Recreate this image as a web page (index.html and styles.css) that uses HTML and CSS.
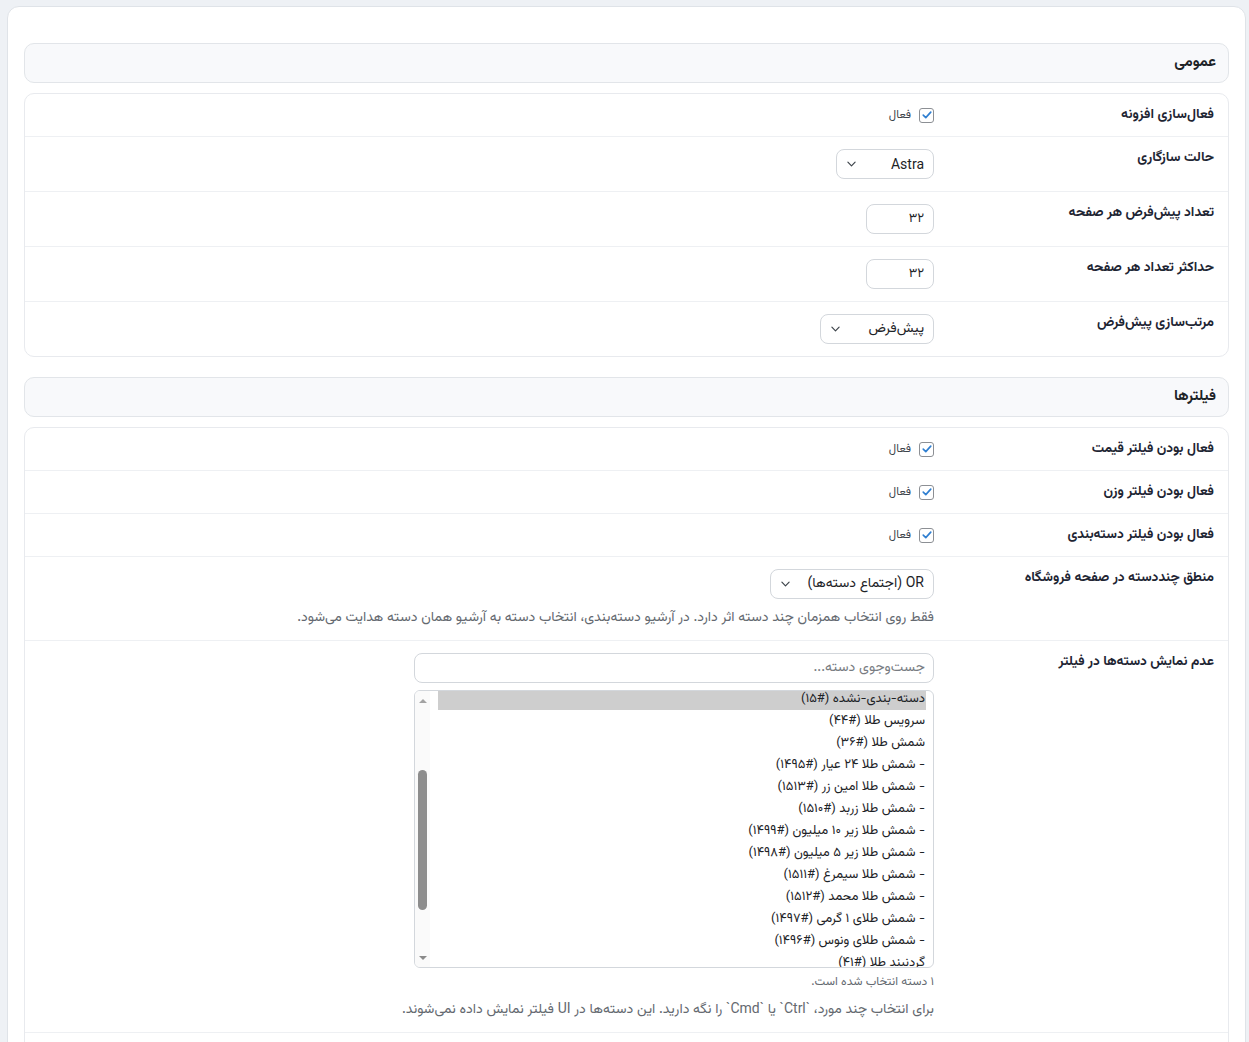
FILE: index.html
```html
<!DOCTYPE html>
<html lang="fa" dir="rtl">
<head>
<meta charset="utf-8">
<title>تنظیمات</title>
<link rel="stylesheet" href="styles.css">
</head>
<body>
<div class="panel">
  <h2 class="sec-head">عمومی</h2>
  <div class="card">
    <div class="row">
      <div class="label">فعال‌سازی افزونه</div>
      <div class="ctl">
        <label class="check"><span class="box"><svg viewBox="0 0 14 14" width="12" height="12"><path d="M2.6 7.2 L5.6 10.1 L11.4 3.6" fill="none" stroke="#2f7fd1" stroke-width="1.9" stroke-linecap="round" stroke-linejoin="round"/></svg></span><span>فعال</span></label>
      </div>
    </div>
    <div class="row">
      <div class="label">حالت سازگاری</div>
      <div class="ctl">
        <div class="select w-astra"><span class="latin">Astra</span><svg class="chev" viewBox="0 0 10 6" width="9" height="6"><path d="M1 1 L5 5 L9 1" fill="none" stroke="#3c434a" stroke-width="1.3" stroke-linecap="round" stroke-linejoin="round"/></svg></div>
      </div>
    </div>
    <div class="row">
      <div class="label">تعداد پیش‌فرض هر صفحه</div>
      <div class="ctl"><input class="num" type="text" value="۳۲"></div>
    </div>
    <div class="row">
      <div class="label">حداکثر تعداد هر صفحه</div>
      <div class="ctl"><input class="num" type="text" value="۳۲"></div>
    </div>
    <div class="row">
      <div class="label">مرتب‌سازی پیش‌فرض</div>
      <div class="ctl">
        <div class="select w-sort"><span>پیش‌فرض</span><svg class="chev" viewBox="0 0 10 6" width="9" height="6"><path d="M1 1 L5 5 L9 1" fill="none" stroke="#3c434a" stroke-width="1.3" stroke-linecap="round" stroke-linejoin="round"/></svg></div>
      </div>
    </div>
  </div>

  <h2 class="sec-head">فیلترها</h2>
  <div class="card">
    <div class="row">
      <div class="label">فعال بودن فیلتر قیمت</div>
      <div class="ctl">
        <label class="check"><span class="box"><svg viewBox="0 0 14 14" width="12" height="12"><path d="M2.6 7.2 L5.6 10.1 L11.4 3.6" fill="none" stroke="#2f7fd1" stroke-width="1.9" stroke-linecap="round" stroke-linejoin="round"/></svg></span><span>فعال</span></label>
      </div>
    </div>
    <div class="row">
      <div class="label">فعال بودن فیلتر وزن</div>
      <div class="ctl">
        <label class="check"><span class="box"><svg viewBox="0 0 14 14" width="12" height="12"><path d="M2.6 7.2 L5.6 10.1 L11.4 3.6" fill="none" stroke="#2f7fd1" stroke-width="1.9" stroke-linecap="round" stroke-linejoin="round"/></svg></span><span>فعال</span></label>
      </div>
    </div>
    <div class="row">
      <div class="label">فعال بودن فیلتر دسته‌بندی</div>
      <div class="ctl">
        <label class="check"><span class="box"><svg viewBox="0 0 14 14" width="12" height="12"><path d="M2.6 7.2 L5.6 10.1 L11.4 3.6" fill="none" stroke="#2f7fd1" stroke-width="1.9" stroke-linecap="round" stroke-linejoin="round"/></svg></span><span>فعال</span></label>
      </div>
    </div>
    <div class="row">
      <div class="label">منطق چنددسته در صفحه فروشگاه</div>
      <div class="ctl">
        <div class="select w-logic"><span><span class="latin">OR</span> (اجتماع دسته‌ها)</span><svg class="chev" viewBox="0 0 10 6" width="9" height="6"><path d="M1 1 L5 5 L9 1" fill="none" stroke="#3c434a" stroke-width="1.3" stroke-linecap="round" stroke-linejoin="round"/></svg></div>
        <p class="desc">فقط روی انتخاب همزمان چند دسته اثر دارد. در آرشیو دسته‌بندی، انتخاب دسته به آرشیو همان دسته هدایت می‌شود.</p>
      </div>
    </div>
    <div class="row">
      <div class="label">عدم نمایش دسته‌ها در فیلتر</div>
      <div class="ctl">
        <input class="search" type="text" placeholder="جست‌وجوی دسته...">
        <div class="listbox" role="listbox" aria-multiselectable="true">
          <div class="opts" id="catlist">
            <div class="opt">آویز طلا (#۴۲)</div>
            <div class="opt">النگو طلا (#۳۹)</div>
            <div class="opt">انگشتر طلا (#۳۸)</div>
            <div class="opt">پابند طلا (#۴۳)</div>
            <div class="opt">پلاک طلا (#۴۰)</div>
            <div class="opt">دستبند طلا (#۳۷)</div>
            <div class="opt sel" id="firstsel">دسته-بندی-نشده (#۱۵)</div>
            <div class="opt">سرویس طلا (#۴۴)</div>
            <div class="opt">شمش طلا (#۳۶)</div>
            <div class="opt">- شمش طلا ۲۴ عیار (#۱۴۹۵)</div>
            <div class="opt">- شمش طلا امین زر (#۱۵۱۳)</div>
            <div class="opt">- شمش طلا زربد (#۱۵۱۰)</div>
            <div class="opt">- شمش طلا زیر ۱۰ میلیون (#۱۴۹۹)</div>
            <div class="opt">- شمش طلا زیر ۵ میلیون (#۱۴۹۸)</div>
            <div class="opt">- شمش طلا سیمرغ (#۱۵۱۱)</div>
            <div class="opt">- شمش طلا محمد (#۱۵۱۲)</div>
            <div class="opt">- شمش طلای ۱ گرمی (#۱۴۹۷)</div>
            <div class="opt">- شمش طلای ونوس (#۱۴۹۶)</div>
            <div class="opt">گردنبند طلا (#۴۱)</div>
            <div class="opt">گوشواره طلا (#۴۵)</div>
            <div class="opt">مدال طلا (#۴۶)</div>
            <div class="opt">نیم‌ست طلا (#۴۷)</div>
            <div class="opt">سکه طلا (#۴۸)</div>
          </div>
          <div class="sbar" aria-hidden="true">
            <span class="arrow up"></span>
            <span class="track"><span class="thumb"></span></span>
            <span class="arrow down"></span>
          </div>
        </div>
        <p class="count">۱ دسته انتخاب شده است.</p>
        <p class="desc desc-b">برای انتخاب چند مورد، <span class="latin">`Ctrl`</span> یا <span class="latin">`Cmd`</span> را نگه دارید. این دسته‌ها در <span class="latin">UI</span> فیلتر نمایش داده نمی‌شوند.</p>
      </div>
    </div>
    <div class="row">
      <div class="label">نمایش تعداد محصولات</div>
      <div class="ctl">
        <label class="check"><span class="box"></span><span>فعال</span></label>
      </div>
    </div>
  </div>
</div>
<script src="script.js"></script>
</body>
</html>
```

FILE: styles.css
```css
html, body {
  margin: 0;
}
body {
  background: #eef1f5;
  padding: 6px 3px 0 7px;
  font-family: "Vazirmatn", "Noto Sans Arabic", "DejaVu Sans", sans-serif;
  color: #1d2327;
}
.latin {
  font-family: Roboto, "Noto Sans", sans-serif;
}
.panel {
  background: #fff;
  border: 1px solid #dfe3e8;
  border-radius: 12px;
  padding: 36px 16px 40px;
}
.sec-head {
  margin: 0;
  background: #f8f9fb;
  border: 1px solid #e2e5e9;
  border-radius: 10px;
  padding: 10px 12px;
  font-size: 15px;
  line-height: 18px;
  font-weight: 700;
  color: #1d2327;
}
.card {
  margin: 10px 0 20px;
  border: 1px solid #e8eaee;
  border-radius: 10px;
  background: #fff;
}
.row {
  display: flex;
  padding: 12px 14px;
  border-bottom: 1px solid #eef0f3;
}
.row:last-child {
  border-bottom: none;
}
.label {
  flex: none;
  width: 280px;
  font-size: 13.7px;
  line-height: 18px;
  font-weight: 700;
  color: #1e2533;
}
.ctl {
  flex: 1;
  display: flex;
  flex-direction: column;
  align-items: flex-start;
  min-width: 0;
}
.check {
  display: flex;
  align-items: center;
  gap: 8px;
  height: 18px;
  font-size: 11.5px;
  color: #3c434a;
}
.box {
  width: 13px;
  height: 13px;
  border: 1px solid #8c8f94;
  border-radius: 3px;
  display: grid;
  place-items: center;
  background: #fff;
}
.select {
  box-sizing: border-box;
  height: 30px;
  display: flex;
  align-items: center;
  justify-content: space-between;
  border: 1px solid #d3d7dc;
  border-radius: 8px;
  padding: 0 9px 0 10px;
  font-size: 14px;
  color: #1d2327;
  background: #fff;
}
.w-astra { width: 98px; }
.w-sort { width: 114px; }
.w-logic { width: 164px; }
.chev {
  flex: none;
}
.num {
  box-sizing: border-box;
  width: 68px;
  height: 30px;
  border: 1px solid #d3d7dc;
  border-radius: 8px;
  padding: 0 9px;
  font: inherit;
  font-size: 13px;
  color: #1d2327;
  text-align: right;
  background: #fff;
  outline: none;
}
.desc {
  margin: 9px 0 0;
  font-size: 14px;
  line-height: 20px;
  color: #646970;
}
.search {
  box-sizing: border-box;
  width: 520px;
  height: 30px;
  border: 1px solid #d3d7dc;
  border-radius: 8px;
  padding: 0 8px;
  font: inherit;
  font-size: 14px;
  color: #1d2327;
  background: #fff;
  outline: none;
}
.search::placeholder {
  color: #787c82;
}
.listbox {
  box-sizing: border-box;
  margin-top: 7px;
  width: 520px;
  height: 278px;
  border: 1px solid #d3d7dc;
  border-radius: 6px;
  display: flex;
  overflow: hidden;
  background: #fff;
}
.opts {
  flex: 1;
  min-width: 0;
  overflow: hidden;
  padding: 0 7px 0 8px;
}
.opt {
  height: 22px;
  line-height: 22px;
  padding: 0 1px;
  font-size: 13px;
  color: #1d2327;
  white-space: nowrap;
}
.opt.sel {
  background: #cecece;
}
.sbar {
  flex: none;
  width: 15px;
  display: flex;
  flex-direction: column;
  align-items: center;
  background: #fafafa;
}
.arrow {
  flex: none;
  height: 16px;
  width: 15px;
  display: flex;
  align-items: center;
  justify-content: center;
}
.arrow::before {
  content: "";
  width: 0;
  height: 0;
  border-left: 4px solid transparent;
  border-right: 4px solid transparent;
}
.arrow.up::before {
  border-bottom: 4px solid #a3a3a3;
  margin-top: 4px;
}
.arrow.down::before {
  border-top: 4px solid #8a8a8a;
  margin-bottom: 2px;
}
.track {
  flex: 1;
  width: 15px;
  display: flex;
  flex-direction: column;
  align-items: center;
}
.thumb {
  margin-top: 63px;
  width: 9px;
  height: 140px;
  border-radius: 5px;
  background: #8d8d8d;
}
.count {
  margin: 6px 0 0;
  font-size: 12px;
  line-height: 16px;
  color: #646970;
}
.desc-b {
  margin-top: 8px;
}
```

FILE: script.js
```js
var list = document.getElementById('catlist');
var first = document.getElementById('firstsel');
list.scrollTop = first.offsetTop - list.offsetTop + 3;
```
